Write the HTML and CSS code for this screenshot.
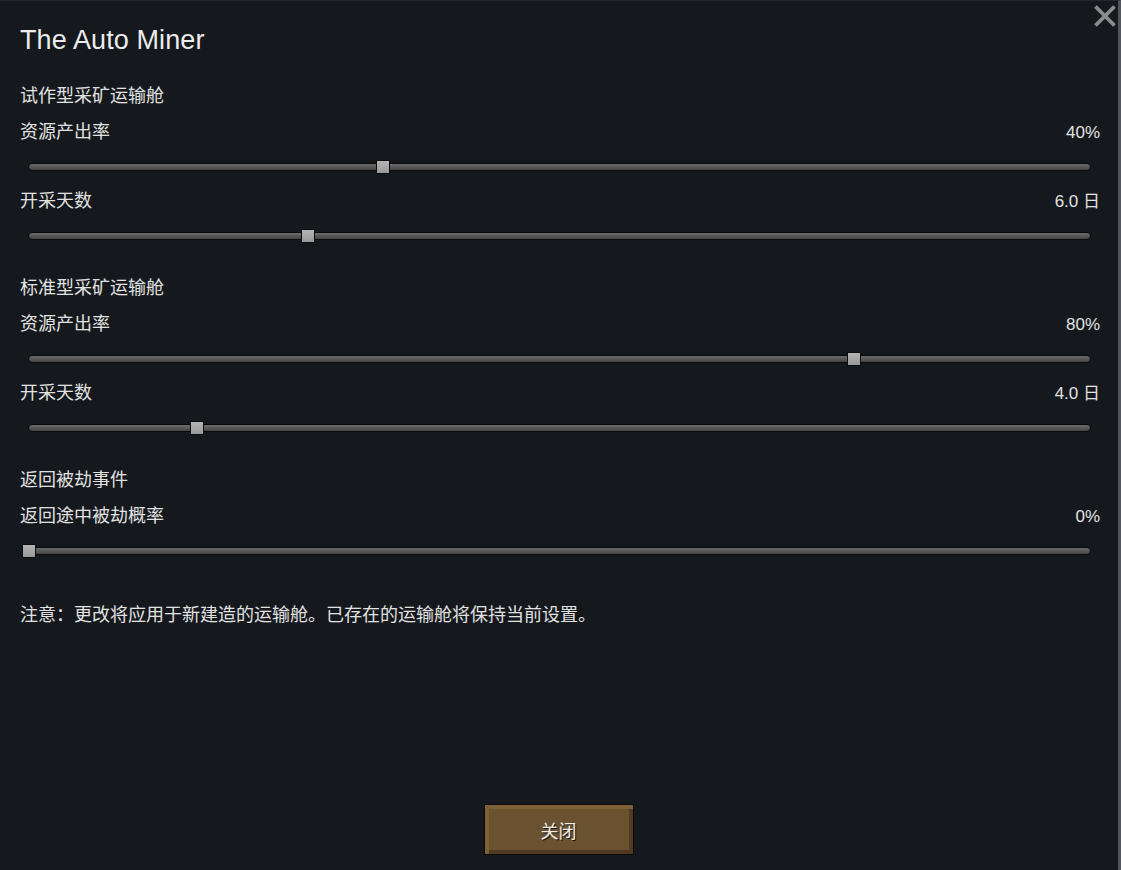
FILE: index.html
```html
<!DOCTYPE html>
<html lang="zh">
<head>
<meta charset="utf-8">
<title>The Auto Miner</title>
<link rel="stylesheet" href="styles.css">
</head>
<body>
<div class="window">
  <button class="close-x" aria-label="关闭">
    <svg width="24" height="24" viewBox="0 0 24 24"><path d="M2.5 2.5 L21.5 21.5 M21.5 2.5 L2.5 21.5" stroke="#8a8c8e" stroke-width="3.8" fill="none"/></svg>
  </button>
  <h1 class="title">The Auto Miner</h1>

  <section class="group">
    <div class="heading">试作型采矿运输舱</div>
    <div class="label-row"><span>资源产出率</span><span class="value">40%</span></div>
    <div class="slider"><div class="track"><div class="thumb" style="left:33.33%"></div></div></div>
    <div class="label-row"><span>开采天数</span><span class="value">6.0 日</span></div>
    <div class="slider"><div class="track"><div class="thumb" style="left:26.32%"></div></div></div>
  </section>

  <section class="group">
    <div class="heading">标准型采矿运输舱</div>
    <div class="label-row"><span>资源产出率</span><span class="value">80%</span></div>
    <div class="slider"><div class="track"><div class="thumb" style="left:77.78%"></div></div></div>
    <div class="label-row"><span>开采天数</span><span class="value">4.0 日</span></div>
    <div class="slider"><div class="track"><div class="thumb" style="left:15.79%"></div></div></div>
  </section>

  <section class="group">
    <div class="heading">返回被劫事件</div>
    <div class="label-row"><span>返回途中被劫概率</span><span class="value">0%</span></div>
    <div class="slider"><div class="track"><div class="thumb" style="left:0%"></div></div></div>
  </section>

  <p class="note">注意：更改将应用于新建造的运输舱。已存在的运输舱将保持当前设置。</p>

  <div class="footer">
    <button class="btn">关闭</button>
  </div>
</div>
</body>
</html>
```

FILE: styles.css
```css
html, body {
  margin: 0;
  padding: 0;
  background: #15181d;
}
body {
  font-family: "Liberation Sans", "Noto Sans CJK SC", sans-serif;
  color: #e2e2e2;
}
.window {
  position: relative;
  box-sizing: border-box;
  width: 1121px;
  height: 870px;
  background: #15181d;
  border-right: 3px solid #50565e;
  border-top: 1px solid #23272d;
  padding: 20px 18px 15px 20px;
  display: flex;
  flex-direction: column;
}
.close-x {
  position: absolute;
  top: 3px;
  right: 1px;
  width: 24px;
  height: 24px;
  padding: 0;
  border: 0;
  background: none;
  cursor: pointer;
}
.close-x svg { display: block; }
.title {
  margin: 0;
  font-weight: normal;
  font-size: 27px;
  line-height: 38px;
  height: 36px;
  color: #ececec;
  letter-spacing: 0.1px;
}
.group { margin-top: 19px; }
.group + .group { margin-top: 18px; }
.heading, .label-row {
  font-family: "Noto Sans CJK SC", "Liberation Sans", sans-serif;
  font-size: 18px;
  line-height: 37px;
  height: 36px;
}
.label-row {
  display: flex;
  justify-content: space-between;
}
.value {
  font-family: "Liberation Sans", "Noto Sans CJK SC", sans-serif;
  font-size: 17px;
  line-height: 42px;
}
.slider {
  height: 33px;
  box-sizing: border-box;
  padding: 15px 9px 0 8px;
}
.track {
  position: relative;
  height: 8px;
  box-sizing: border-box;
  border: 1px solid #08090b;
  border-radius: 4px;
  background: linear-gradient(#6c6c6c 0%, #5a5a5a 45%, #444444 100%);
}
.thumb {
  position: absolute;
  top: 50%;
  width: 14px;
  height: 14px;
  box-sizing: border-box;
  border: 1px solid #0c0d0f;
  background: linear-gradient(#b4b4b4, #999999);
  transform: translate(-50%, -50%);
}
.note {
  margin: 30px 0 0 0;
  font-family: "Noto Sans CJK SC", "Liberation Sans", sans-serif;
  font-size: 18px;
  line-height: 36px;
}
.footer {
  margin-top: auto;
  display: flex;
  justify-content: center;
  padding-right: 3px;
}
.btn {
  width: 150px;
  height: 51px;
  box-sizing: border-box;
  border: 1px solid #0b0a08;
  padding: 0;
  background: #6a5230;
  box-shadow:
    inset 4px 4px 0 #7c6037,
    inset -4px -4px 0 #4e3b22,
    inset -4px 0 0 #8a6b3f;
  color: #f0ece4;
  font-family: "Noto Sans CJK SC", "Liberation Sans", sans-serif;
  font-size: 18px;
  text-shadow: 1px 1px 0 #1a140b;
  cursor: pointer;
}
```
